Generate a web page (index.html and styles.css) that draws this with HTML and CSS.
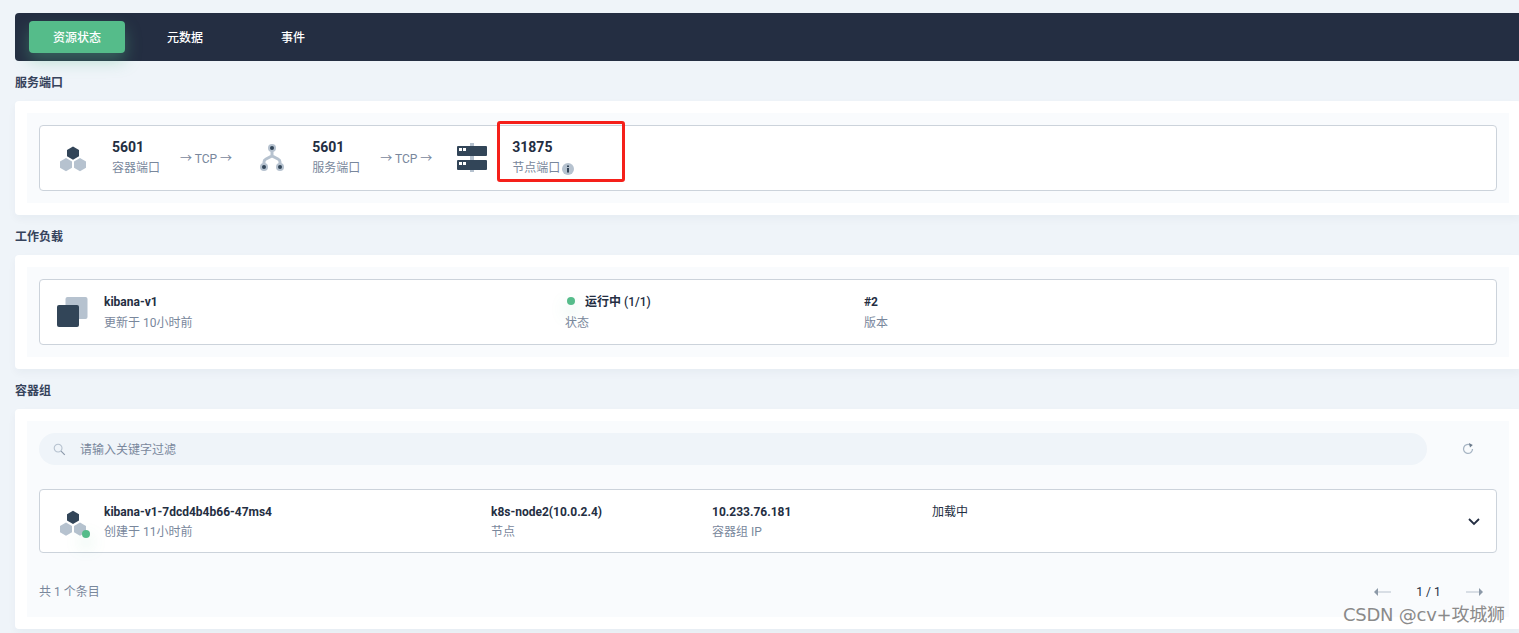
FILE: index.html
```html
<!DOCTYPE html>
<html lang="zh-CN">
<head>
<meta charset="utf-8">
<title>资源状态</title>
<link rel="stylesheet" href="styles.css">
</head>
<body>
<div class="page">
  <nav class="tabs">
    <a class="tab active">资源状态</a>
    <a class="tab">元数据</a>
    <a class="tab">事件</a>
  </nav>

  <h2 class="title">服务端口</h2>
  <section class="card">
    <div class="inner">
      <div class="box ports">
        <svg class="slot" viewBox="0 0 40 40">
          <path class="light" d="M14 20l6 3.400v6.400L14 33.200 8 29.800v-6.400z"/>
          <path class="light" d="M28 20l6 3.400v6.400l-6 3.400-6-3.400v-6.400z"/>
          <path class="dark" d="M21 8.500l6 3.400v6.400l-6 3.400-6-3.400v-6.400z"/>
        </svg>
        <div class="port"><strong>5601</strong><span>容器端口</span></div>
        <div class="proto">→ TCP →</div>
        <svg class="slot" viewBox="0 0 40 40">
          <path class="branch" d="M20 10v9M12 29v-5q0-2 2-3l6-3 6 3q2 1 2 3v5"/>
          <circle class="light" cx="20" cy="10" r="4"/><circle class="dark" cx="20" cy="10" r="2"/>
          <circle class="light" cx="12" cy="29" r="4"/><circle class="dark" cx="12" cy="29" r="2"/>
          <circle class="light" cx="28" cy="29" r="4"/><circle class="dark" cx="28" cy="29" r="2"/>
        </svg>
        <div class="port"><strong>5601</strong><span>服务端口</span></div>
        <div class="proto">→ TCP →</div>
        <svg class="slot" viewBox="0 0 40 40">
          <rect class="light" x="18" y="5" width="4" height="29"/>
          <rect class="dark" x="5" y="8" width="30" height="10" rx="1"/>
          <rect class="dark" x="5" y="22" width="30" height="10" rx="1"/>
          <path class="hole" d="M7 10h3v3H7zM11 10h3v3h-3zM7 24h3v3H7zM11 24h3v3h-3z"/>
        </svg>
        <div class="port"><strong>31875</strong>
          <span class="with-info">节点端口<svg class="info" viewBox="0 0 12 12"><circle class="light" cx="6" cy="6" r="6"/><path class="dark" d="M5 2.500h2v1.600H5zM5 5h2v4.500H5z"/></svg></span>
        </div>
      </div>
    </div>
  </section>

  <h2 class="title">工作负载</h2>
  <section class="card">
    <div class="inner">
      <div class="box workload">
        <svg class="slot" viewBox="0 0 40 40">
          <rect class="light" x="13.500" y="5" width="22" height="22" rx="2"/>
          <rect class="dark" x="5" y="13" width="22" height="22" rx="2"/>
        </svg>
        <div class="cell w-name"><strong>kibana-v1</strong><span>更新于 10小时前</span></div>
        <div class="cell w-status"><strong class="status"><i class="dot"></i>运行中 <em>(1/1)</em></strong><span>状态</span></div>
        <div class="cell"><strong>#2</strong><span>版本</span></div>
      </div>
    </div>
  </section>

  <h2 class="title">容器组</h2>
  <section class="card">
    <div class="inner pods">
      <div class="toolbar">
        <div class="search">
          <svg class="search-icon" viewBox="0 0 14 14"><circle cx="5.500" cy="5.500" r="4.200"/><path class="handle" d="M8.700 8.700l4 4"/></svg>
          <span>请输入关键字过滤</span>
        </div>
        <svg class="refresh" viewBox="0 0 14 14"><path d="M9.500 3.200a4.500 4.500 0 1 0 2 3.800"/><path class="refresh-head" d="M8 1l3.800 2L9 5.500z"/></svg>
      </div>
      <div class="box pod">
        <div class="slot pod-icon">
          <svg viewBox="0 0 40 40">
            <path class="light" d="M14 20.500l6 3.400v6.400l-6 3.400-6-3.400v-6.400z"/>
            <path class="light" d="M28 20.500l6 3.400v6.400l-6 3.400-6-3.400v-6.400z"/>
            <path class="dark" d="M21 8.800l6 3.400v6.400l-6 3.400-6-3.400v-6.400z"/>
          </svg>
          <i class="dot badge"></i>
        </div>
        <div class="cell p-name"><strong>kibana-v1-7dcd4b4b66-47ms4</strong><span>创建于 11小时前</span></div>
        <div class="cell p-node"><strong>k8s-node2(10.0.2.4)</strong><span>节点</span></div>
        <div class="cell p-ip"><strong>10.233.76.181</strong><span>容器组 IP</span></div>
        <div class="cell p-load">加载中</div>
        <svg class="chevron" viewBox="0 0 12 8"><path d="M1 1l5 5 5-5"/></svg>
      </div>
      <footer class="foot">
        <span>共 1 个条目</span>
        <div class="pager">
          <svg class="arrow" viewBox="0 0 17 8"><path class="shaft" d="M3 4h14"/><path class="tip" d="M0 4l4-4v8z"/></svg>
          <b>1 / 1</b>
          <svg class="arrow" viewBox="0 0 17 8"><path class="shaft" d="M0 4h14"/><path class="tip" d="M17 4l-4-4v8z"/></svg>
        </div>
      </footer>
    </div>
  </section>
</div>
<div class="redmark"></div>
<div class="watermark">CSDN @cv+攻城狮</div>
</body>
</html>
```
FILE: styles.css
```css
* { box-sizing: border-box; }
html, body { margin: 0; height: 633px; overflow: hidden; }
body {
  position: relative;
  background: #eff4f9;
  color: #242e42;
  font: 12px/20px Roboto, "Noto Sans CJK SC", sans-serif;
}
.page { width: 1506px; margin-left: 15px; padding-top: 13px; }

.tabs {
  display: flex;
  gap: 12px;
  height: 48px;
  padding: 8px 14px;
  background: #242e42;
  border-radius: 4px 0 0 4px;
}
.tab {
  width: 96px;
  height: 32px;
  padding-top: 1px;
  color: #fff;
  font-weight: 500;
  line-height: 32px;
  text-align: center;
  border-radius: 4px;
}
.tab.active {
  background: #55bc8a;
  box-shadow: 0 8px 16px rgba(85, 188, 138, .36);
}

.title {
  margin: 14px 0 10px;
  font-size: 12px;
  font-weight: 700;
  line-height: 16px;
  color: #36435c;
}
.card {
  padding: 12px;
  background: #fff;
  border-radius: 4px;
  box-shadow: 0 4px 8px rgba(36, 46, 66, .04);
}
.inner { padding: 12px; background: #f9fbfd; }
.box {
  display: flex;
  align-items: center;
  height: 66px;
  padding-left: 12px;
  background: #fff;
  border: 1px solid #ccd3db;
  border-radius: 4px;
}
.slot { flex: none; width: 40px; height: 40px; display: block; }
.light { fill: #b6c2cf; }
.dark { fill: #324558; }
.hole { fill: #fff; }
.branch { fill: none; stroke: #b6c2cf; stroke-width: 3; }

.ports { gap: 20px; }
.port strong { display: block; margin-bottom: 2px; font-size: 14px; font-weight: 700; line-height: 18px; }
.port span { display: block; color: #79879c; line-height: 20px; }
.with-info { display: flex !important; align-items: center; }
.info { width: 12px; height: 12px; margin: 1px 0 0 2px; }
.proto { padding-top: 2px; color: #79879c; line-height: 16px; }

.cell { flex: none; }
.cell strong { display: block; font-weight: 700; line-height: 20px; }
.cell span { display: block; color: #79879c; line-height: 20px; }
.workload .slot, .pod .slot { margin-right: 12px; }
.workload .cell { padding-top: 1px; }
.workload .cell strong { margin-bottom: 1px; }
.w-name { width: 461px; }
.w-status { width: 299px; }
.status { position: relative; padding-left: 20px; }
.status em { font-style: normal; font-weight: 500; }
.dot { display: block; width: 8px; height: 8px; border-radius: 50%; background: #55bc8a; box-shadow: 0 8px 16px rgba(85, 188, 138, .36); }
.status .dot { position: absolute; left: 2px; top: 5px; }

.toolbar { display: flex; align-items: center; height: 32px; margin-bottom: 24px; }
.search {
  display: flex;
  align-items: center;
  width: 1388px;
  height: 32px;
  padding-left: 14px;
  background: #eff4f9;
  border-radius: 16px;
  color: #79879c;
}
.search span { padding-top: 2px; }
.search-icon { width: 13px; height: 13px; margin-right: 14px; fill: none; stroke: #b6c2cf; stroke-width: 1.200; }
.search-icon .handle { stroke: #8a97a8; }
.refresh { width: 14px; height: 14px; margin-left: 34px; fill: none; stroke: #a7b5c4; stroke-width: 1.300; }
.refresh-head { fill: #6c7b8c; stroke: none; }

.pods { padding-bottom: 15px; }
.pod { height: 64px; padding-top: 2px; }
.pod-icon { position: relative; }
.pod-icon svg { display: block; width: 40px; height: 40px; }
.badge { position: absolute; left: 30px; top: 28px; }
.p-name { width: 387px; }
.p-node { width: 221px; }
.p-ip { width: 220px; }
.p-load { align-self: flex-start; margin-top: 10px; }
.chevron { width: 12px; height: 8px; margin-left: auto; margin-right: 16px; fill: none; stroke: #242e42; stroke-width: 1.800; }

.foot {
  display: flex;
  justify-content: space-between;
  align-items: center;
  height: 20px;
  margin-top: 29px;
  color: #79879c;
}
.pager { display: flex; align-items: center; margin-right: 14px; }
.pager b { width: 75px; font-weight: 400; color: #242e42; text-align: center; }
.arrow { width: 17px; height: 8px; }
.shaft { stroke: #c1cbd6; stroke-width: 1.200; fill: none; }
.tip { fill: #8c99a8; }

.redmark {
  position: absolute;
  left: 497px;
  top: 121px;
  width: 128px;
  height: 61px;
  border: 3px solid #f5201a;
  border-radius: 3px;
}
.watermark {
  position: absolute;
  left: 1343px;
  top: 603px;
  font: 18px/24px "DejaVu Sans", "Noto Sans CJK SC", sans-serif;
  letter-spacing: -.25px;
  color: #8a8a8a;
  text-shadow: 0 0 2px #fff;
  white-space: nowrap;
}
```
